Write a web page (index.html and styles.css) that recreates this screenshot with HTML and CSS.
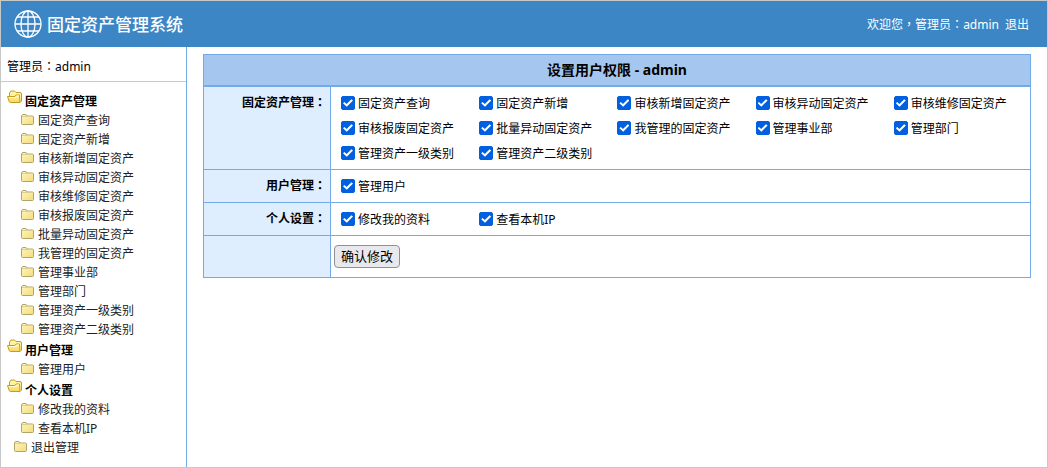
FILE: index.html
```html
<!DOCTYPE html>
<html lang="zh-CN">
<head>
<meta charset="utf-8">
<title>固定资产管理系统</title>
<link rel="stylesheet" href="styles.css">
</head>
<body>
<svg class="defs" aria-hidden="true">
  <defs>
    <linearGradient id="fill-closed" x2="1" y2="1"><stop stop-color="#fff6c0"/><stop offset="1" stop-color="#f3dc7c"/></linearGradient>
    <linearGradient id="fill-open" x2="0" y2="1"><stop stop-color="#fff6a8"/><stop offset="1" stop-color="#f9d35a"/></linearGradient>
  </defs>
  <symbol id="folder" viewBox="0 0 13 11">
    <path d="M.5 9.500V2l1-1.500h3.500l1 1.500h5.500q1 0 1 1v6.500q0 1-1 1h-10q-1 0-1-1z" fill="url(#fill-closed)" stroke="#b0a468"/>
    <path d="M1 2.500h11" stroke="#d9cf90" fill="none"/>
  </symbol>
  <symbol id="folder-open" viewBox="0 0 16 14">
    <path d="M2.500 6V3l1.500-2h3.500l1.500 1.500h4q1.500 0 1.500 1.500v7l-1.500 1.500H4z" fill="#fff3a0" stroke="#c29b2c"/>
    <path d="M.5 6.500h7.500l1-1.500h3.500l.5 7.500H3.500q-1 0-1.300-1z" fill="url(#fill-open)" stroke="#c79a1c"/>
    <path d="M2 7.500h6.500l1-1.500h2.500" stroke="#fffbe0" fill="none"/>
  </symbol>
</svg>
<div class="page">
  <header class="topbar">
    <svg class="logo" viewBox="0 0 28 28" fill="none" stroke="#fff" stroke-width="1.300" aria-hidden="true">
      <circle cx="14" cy="14" r="13"/><ellipse cx="14" cy="14" rx="7" ry="13"/>
      <path d="M14 1v26M1 14h26M3 7h22M3 21h22"/>
    </svg>
    <h1 class="brand">固定资产管理系统</h1>
    <p class="welcome">欢迎您<span class="mark" lang="zh-TW">，</span>管理员<span class="mark" lang="zh-TW">：</span>admin</p>
    <a class="logout" href="#">退出</a>
  </header>
  <div class="body">
    <aside class="sidebar">
      <p class="operator">管理员<span class="mark" lang="zh-TW">：</span>admin</p>
      <nav class="tree">
        <h2 class="group"><svg class="open" aria-hidden="true"><use href="#folder-open"/></svg>固定资产管理</h2>
        <a class="item" href="#"><svg class="closed" aria-hidden="true"><use href="#folder"/></svg>固定资产查询</a>
        <a class="item" href="#"><svg class="closed" aria-hidden="true"><use href="#folder"/></svg>固定资产新增</a>
        <a class="item" href="#"><svg class="closed" aria-hidden="true"><use href="#folder"/></svg>审核新增固定资产</a>
        <a class="item" href="#"><svg class="closed" aria-hidden="true"><use href="#folder"/></svg>审核异动固定资产</a>
        <a class="item" href="#"><svg class="closed" aria-hidden="true"><use href="#folder"/></svg>审核维修固定资产</a>
        <a class="item" href="#"><svg class="closed" aria-hidden="true"><use href="#folder"/></svg>审核报废固定资产</a>
        <a class="item" href="#"><svg class="closed" aria-hidden="true"><use href="#folder"/></svg>批量异动固定资产</a>
        <a class="item" href="#"><svg class="closed" aria-hidden="true"><use href="#folder"/></svg>我管理的固定资产</a>
        <a class="item" href="#"><svg class="closed" aria-hidden="true"><use href="#folder"/></svg>管理事业部</a>
        <a class="item" href="#"><svg class="closed" aria-hidden="true"><use href="#folder"/></svg>管理部门</a>
        <a class="item" href="#"><svg class="closed" aria-hidden="true"><use href="#folder"/></svg>管理资产一级类别</a>
        <a class="item" href="#"><svg class="closed" aria-hidden="true"><use href="#folder"/></svg>管理资产二级类别</a>
        <h2 class="group"><svg class="open" aria-hidden="true"><use href="#folder-open"/></svg>用户管理</h2>
        <a class="item" href="#"><svg class="closed" aria-hidden="true"><use href="#folder"/></svg>管理用户</a>
        <h2 class="group"><svg class="open" aria-hidden="true"><use href="#folder-open"/></svg>个人设置</h2>
        <a class="item" href="#"><svg class="closed" aria-hidden="true"><use href="#folder"/></svg>修改我的资料</a>
        <a class="item" href="#"><svg class="closed" aria-hidden="true"><use href="#folder"/></svg>查看本机IP</a>
        <a class="item root" href="#"><svg class="closed" aria-hidden="true"><use href="#folder"/></svg>退出管理</a>
      </nav>
    </aside>
    <main class="content">
      <form>
        <table class="rights">
          <colgroup><col class="name-col"><col></colgroup>
          <thead><tr><th class="title" colspan="2">设置用户权限 - admin</th></tr></thead>
          <tbody>
            <tr>
              <th class="name" scope="row">固定资产管理<span class="mark" lang="zh-TW">：</span></th>
              <td><div class="options">
                <label><input type="checkbox" checked>固定资产查询</label>
                <label><input type="checkbox" checked>固定资产新增</label>
                <label><input type="checkbox" checked>审核新增固定资产</label>
                <label><input type="checkbox" checked>审核异动固定资产</label>
                <label><input type="checkbox" checked>审核维修固定资产</label>
                <label><input type="checkbox" checked>审核报废固定资产</label>
                <label><input type="checkbox" checked>批量异动固定资产</label>
                <label><input type="checkbox" checked>我管理的固定资产</label>
                <label><input type="checkbox" checked>管理事业部</label>
                <label><input type="checkbox" checked>管理部门</label>
                <label><input type="checkbox" checked>管理资产一级类别</label>
                <label><input type="checkbox" checked>管理资产二级类别</label>
              </div></td>
            </tr>
            <tr>
              <th class="name" scope="row">用户管理<span class="mark" lang="zh-TW">：</span></th>
              <td><div class="options"><label><input type="checkbox" checked>管理用户</label></div></td>
            </tr>
            <tr>
              <th class="name" scope="row">个人设置<span class="mark" lang="zh-TW">：</span></th>
              <td><div class="options">
                <label><input type="checkbox" checked>修改我的资料</label>
                <label><input type="checkbox" checked>查看本机IP</label>
              </div></td>
            </tr>
            <tr>
              <td class="name"></td>
              <td class="actions"><button class="submit" type="submit">确认修改</button></td>
            </tr>
          </tbody>
        </table>
      </form>
    </main>
  </div>
</div>
</body>
</html>
```
FILE: styles.css
```css
* { box-sizing: border-box; }
body {
  margin: 0;
  font: 12px/19px "Noto Sans", "Noto Sans CJK SC", sans-serif;
  color: #000;
  background: #fff;
}
h1, h2, p { margin: 0; }
a { color: inherit; text-decoration: none; }
.mark { font-family: "Noto Sans CJK TC", sans-serif; line-height: 1; }
.defs { position: absolute; width: 0; height: 0; }
.page {
  min-height: 100vh;
  display: flex;
  flex-direction: column;
  border: 1px solid #c8c8c8;
}
.topbar {
  display: flex;
  align-items: center;
  height: 46px;
  padding: 0 18px 0 13px;
  color: #fff;
  background: #3c86c6;
}
.logo { width: 28px; height: 28px; margin-right: 5px; }
.brand { flex: 1; padding-top: 2px; font-size: 17px; line-height: 24px; font-weight: 500; }
.logout { margin-left: 6px; }
.body { flex: 1; display: flex; }
.sidebar { width: 186px; flex: none; border-right: 1px solid #73aaea; }
.operator {
  padding: 10px 6px 5px;
  border-bottom: 1px solid #c8c8c8;
}
.tree { padding: 8px 6px 0; }
.group {
  display: flex;
  align-items: flex-start;
  gap: 2px;
  padding-top: 2px;
  font-size: 12px;
  line-height: 19px;
}
.open { width: 16px; height: 14px; margin-top: -2px; }
.item {
  display: flex;
  align-items: flex-start;
  gap: 4px;
  padding-left: 14px;
  color: #222;
}
.item.root { padding-left: 7px; }
.closed { width: 13px; height: 11px; margin-top: 3px; }
.content { flex: 1; padding: 7px 16px; }
.rights { width: 100%; border-collapse: collapse; table-layout: fixed; }
.rights th, .rights td { padding: 0; border: 1px solid #73aaea; }
.name-col { width: 127px; }
.rights .title {
  height: 31px;
  padding-top: 1px;
  font-size: 14px;
  line-height: 20px;
  background: #a5c7ef;
  border-bottom-width: 2px;
}
.rights .name {
  padding: 6px 4px 0 0;
  text-align: right;
  vertical-align: top;
  background: #deeeff;
}
.options {
  display: grid;
  grid-template-columns: repeat(5, minmax(0, 1fr));
  padding: 4px 0 3px 8px;
}
.options label {
  display: flex;
  align-items: center;
  gap: 3px;
  height: 25px;
  padding-left: 2px;
  white-space: nowrap;
}
.options input {
  appearance: none;
  flex: none;
  display: grid;
  place-items: center;
  width: 14px;
  height: 14px;
  margin: 0;
  border-radius: 2px;
  border: 1px solid #0060df;
}
.options input:checked { background: #0060df; }
.options input:checked::after {
  content: "";
  width: 10px;
  height: 8px;
  background: #fff;
  clip-path: polygon(0 52%, 14% 36%, 36% 62%, 84% 2%, 100% 18%, 38% 96%);
}
.rights .actions { height: 42px; padding-left: 3px; }
.submit {
  display: block;
  height: 23px;
  padding: 0 6px;
  font: 13px/20px "Noto Sans", "Noto Sans CJK SC", sans-serif;
  color: #000;
  background: #e9e9ed;
  border: 1px solid #8f8f9d;
  border-radius: 4px;
}
```
